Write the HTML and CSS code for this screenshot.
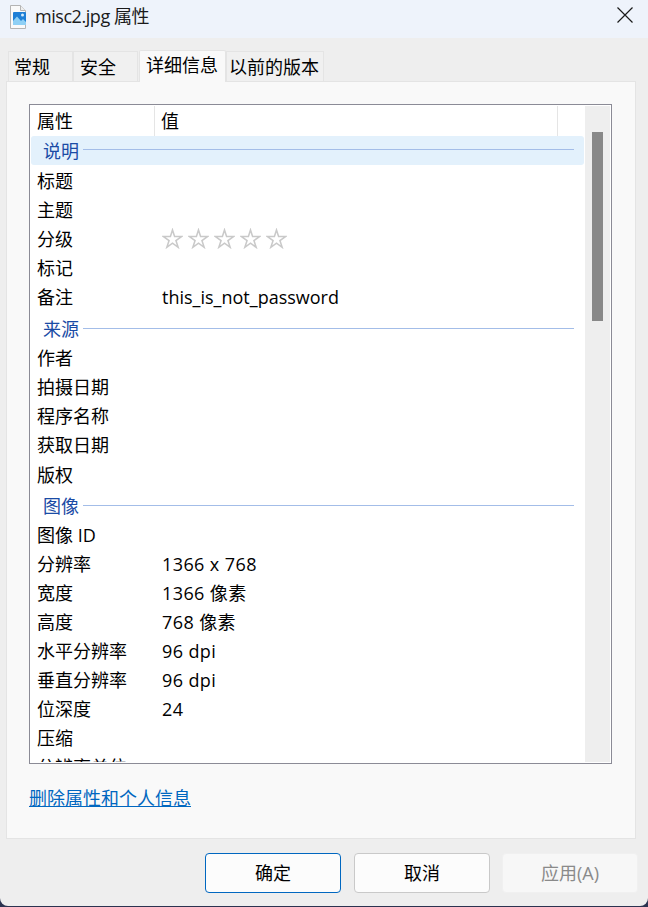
FILE: index.html
```html
<!DOCTYPE html>
<html lang="zh-CN">
<head>
<meta charset="utf-8">
<title>misc2.jpg 属性</title>
<link rel="stylesheet" href="styles.css">
</head>
<body>
<div class="window">
  <header class="titlebar">
    <svg class="file-icon" width="18" height="24" viewBox="0 0 18 24">
      <path d="M1.5 .5H11.5L16.5 5.5V23.5H1.5Z" fill="#fafafa" stroke="#b4b4b4"/>
      <path d="M11.5 .5V5.5H16.5" fill="#eee" stroke="#b4b4b4"/>
      <rect x="4" y="7" width="13" height="13" rx="1" fill="#1e7fd6"/>
      <path d="M4 20V16L8 11.5L12 16L14 14L17 17V20Z" fill="#8fd0f5"/>
      <circle cx="13.5" cy="10" r="1.5" fill="#d5ecfb"/>
    </svg>
    <span class="title">misc2.jpg 属性</span>
    <svg class="close" width="16" height="16" viewBox="0 0 16 16">
      <path d="M.5 .5L15.5 15.5M15.5 .5L.5 15.5" stroke="#1a1a1a" stroke-width="1.2" fill="none"/>
    </svg>
  </header>
  <nav class="tabs">
    <div class="tab t-a">常规</div>
    <div class="tab t-b">安全</div>
    <div class="tab active">详细信息</div>
    <div class="tab t-d">以前的版本</div>
  </nav>
  <main class="panel">
    <section class="list">
      <div class="content">
        <div class="head">
          <div class="hcell hname">属性</div>
          <div class="hcell hval">值</div>
          <div class="hcell hrest"></div>
        </div>
        <div class="rows">
          <div class="group selected"><span>说明</span><i></i></div>
          <div class="row"><span class="k">标题</span></div>
          <div class="row"><span class="k">主题</span></div>
          <div class="row"><span class="k">分级</span>
            <span class="stars">
              <svg width="21" height="21" viewBox="0 0 22 22"><path class="star" d="M11 2L13.2 8.9L20.5 8.9L14.6 13.2L16.9 20.2L11 15.9L5.1 20.2L7.4 13.2L1.5 8.9L8.8 8.9Z"/></svg>
              <svg width="21" height="21" viewBox="0 0 22 22"><path class="star" d="M11 2L13.2 8.9L20.5 8.9L14.6 13.2L16.9 20.2L11 15.9L5.1 20.2L7.4 13.2L1.5 8.9L8.8 8.9Z"/></svg>
              <svg width="21" height="21" viewBox="0 0 22 22"><path class="star" d="M11 2L13.2 8.9L20.5 8.9L14.6 13.2L16.9 20.2L11 15.9L5.1 20.2L7.4 13.2L1.5 8.9L8.8 8.9Z"/></svg>
              <svg width="21" height="21" viewBox="0 0 22 22"><path class="star" d="M11 2L13.2 8.9L20.5 8.9L14.6 13.2L16.9 20.2L11 15.9L5.1 20.2L7.4 13.2L1.5 8.9L8.8 8.9Z"/></svg>
              <svg width="21" height="21" viewBox="0 0 22 22"><path class="star" d="M11 2L13.2 8.9L20.5 8.9L14.6 13.2L16.9 20.2L11 15.9L5.1 20.2L7.4 13.2L1.5 8.9L8.8 8.9Z"/></svg>
            </span>
          </div>
          <div class="row"><span class="k">标记</span></div>
          <div class="row"><span class="k">备注</span><span class="v">this_is_not_password</span></div>
          <div class="group"><span>来源</span><i></i></div>
          <div class="row"><span class="k">作者</span></div>
          <div class="row"><span class="k">拍摄日期</span></div>
          <div class="row"><span class="k">程序名称</span></div>
          <div class="row"><span class="k">获取日期</span></div>
          <div class="row lower"><span class="k">版权</span></div>
          <div class="group"><span>图像</span><i></i></div>
          <div class="row"><span class="k">图像 ID</span></div>
          <div class="row"><span class="k">分辨率</span><span class="v num">1366 x 768</span></div>
          <div class="row"><span class="k">宽度</span><span class="v num">1366 像素</span></div>
          <div class="row"><span class="k">高度</span><span class="v num">768 像素</span></div>
          <div class="row"><span class="k">水平分辨率</span><span class="v num">96 dpi</span></div>
          <div class="row"><span class="k">垂直分辨率</span><span class="v num">96 dpi</span></div>
          <div class="row"><span class="k">位深度</span><span class="v num">24</span></div>
          <div class="row"><span class="k">压缩</span></div>
          <div class="row"><span class="k">分辨率单位</span></div>
        </div>
      </div>
      <div class="scrollbar"><div class="thumb"></div></div>
    </section>
    <a class="link" href="#">删除属性和个人信息</a>
  </main>
  <footer class="actions">
    <button class="btn primary">确定</button>
    <button class="btn">取消</button>
    <button class="btn disabled">应用(A)</button>
  </footer>
</div>
</body>
</html>
```
FILE: styles.css
```css
* { box-sizing: border-box; }
html, body { margin: 0; height: 100%; background: #2b3350; }
body { font: 18px/29px "Open Sans", "Noto Sans CJK SC", sans-serif; color: #000; overflow: hidden; }
.window { height: 906px; background: #eeeeee; border-radius: 0 0 8px 8px; overflow: hidden; display: flex; flex-direction: column; }
.titlebar { height: 38px; flex: none; background: #eef3fb; display: flex; align-items: center; padding: 0 15px 0 9px; }
.file-icon { margin-top: -4px; }
.title { margin-left: 8px; margin-top: -6px; font-size: 18px; color: #1a1a1a; letter-spacing: -.45px; }
.close { margin-left: auto; margin-top: -8px; }
.tabs { height: 43px; flex: none; display: flex; align-items: flex-end; padding-left: 8px; position: relative; z-index: 1; }
.tab { height: 30px; border: 1px solid #e4e4e4; border-bottom: 0; background: #f0f0f0; font-size: 18px; line-height: 30px; margin-bottom: 0; }
.t-a { width: 65px; padding-left: 5px; }
.t-b { width: 65px; padding-left: 6px; }
.active { width: 87px; height: 32px; margin-left: 1px; margin-bottom: -1px; padding-left: 6px; background: #f9f9f9; line-height: 28px; border-radius: 2px 2px 0 0; }
.t-d { width: 98px; padding-left: 2px; }
.panel { height: 758px; flex: none; margin: 0 12px 0 6px; background: #f9f9f9; border: 1px solid #e4e4e4; padding: 22px 23px 0 22px; }
.list { height: 660px; width: 583px; border: 1px solid #8b8b96; background: #fff; display: flex; padding: 1px 0 1px 1px; }
.content { width: 553px; overflow: hidden; flex: none; }
.head { display: flex; height: 30px; line-height: 30px; }
.hcell { border-right: 1px solid #e5e5e5; }
.hname { width: 124px; padding-left: 6px; }
.hval { width: 403px; padding-left: 6px; }
.hrest { border-right: 0; }
.rows { display: flex; flex-direction: column; }
.group { flex: none; height: 29px; margin: 3px 0 0; padding: 0 10px 0 12px; display: flex; align-items: center; gap: 4px; color: #1a4ba5; border-radius: 3px; }
.group i { flex: 1; height: 1px; background: #a3bde8; margin-top: -2px; }
.group.selected { margin-top: 0; margin-bottom: 2px; background: #e3f1fc; }
.selected span { padding-top: 2px; }
.row { flex: none; height: 29px; display: flex; align-items: center; }
.lower { margin-top: 1px; margin-bottom: -1px; }
.k { width: 125px; padding-left: 6px; flex: none; }
.v { padding-left: 6px; }
.num { letter-spacing: .4px; }
.stars { display: flex; gap: 5px; margin: -2px 0 0 6px; }
.star { fill: #fff; stroke: #c9c9c9; stroke-width: 1.6; }
.scrollbar { width: 25px; margin-left: 1px; background: #eeeeee; padding: 26px 7px 0; flex: none; }
.thumb { width: 11px; height: 189px; background: #888888; }
.link { display: block; margin-top: 20px; width: max-content; color: #0067c0; font-size: 18px; text-decoration: underline; }
.actions { flex: 1; display: flex; padding: 14px 10px 0 205px; gap: 13px; }
.btn { width: 136px; height: 40px; font: inherit; border: 1px solid #c9c9c9; border-radius: 4px; background: #fcfcfc; color: #000; padding: 0; }
.primary { border-color: #0067c0; }
.btn.disabled { background: #f7f7f7; border-color: #f0f0f0; color: #8a8a8a; margin-left: -1px; }
```
